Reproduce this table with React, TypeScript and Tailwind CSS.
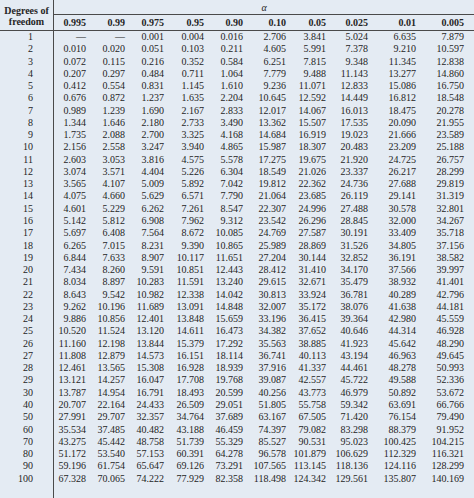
import React from "react";

const rows: [string, string[]][] = [
  ["1", ["—", "—", "0.001", "0.004", "0.016", "2.706", "3.841", "5.024", "6.635", "7.879"]],
  ["2", ["0.010", "0.020", "0.051", "0.103", "0.211", "4.605", "5.991", "7.378", "9.210", "10.597"]],
  ["3", ["0.072", "0.115", "0.216", "0.352", "0.584", "6.251", "7.815", "9.348", "11.345", "12.838"]],
  ["4", ["0.207", "0.297", "0.484", "0.711", "1.064", "7.779", "9.488", "11.143", "13.277", "14.860"]],
  ["5", ["0.412", "0.554", "0.831", "1.145", "1.610", "9.236", "11.071", "12.833", "15.086", "16.750"]],
  ["6", ["0.676", "0.872", "1.237", "1.635", "2.204", "10.645", "12.592", "14.449", "16.812", "18.548"]],
  ["7", ["0.989", "1.239", "1.690", "2.167", "2.833", "12.017", "14.067", "16.013", "18.475", "20.278"]],
  ["8", ["1.344", "1.646", "2.180", "2.733", "3.490", "13.362", "15.507", "17.535", "20.090", "21.955"]],
  ["9", ["1.735", "2.088", "2.700", "3.325", "4.168", "14.684", "16.919", "19.023", "21.666", "23.589"]],
  ["10", ["2.156", "2.558", "3.247", "3.940", "4.865", "15.987", "18.307", "20.483", "23.209", "25.188"]],
  ["11", ["2.603", "3.053", "3.816", "4.575", "5.578", "17.275", "19.675", "21.920", "24.725", "26.757"]],
  ["12", ["3.074", "3.571", "4.404", "5.226", "6.304", "18.549", "21.026", "23.337", "26.217", "28.299"]],
  ["13", ["3.565", "4.107", "5.009", "5.892", "7.042", "19.812", "22.362", "24.736", "27.688", "29.819"]],
  ["14", ["4.075", "4.660", "5.629", "6.571", "7.790", "21.064", "23.685", "26.119", "29.141", "31.319"]],
  ["15", ["4.601", "5.229", "6.262", "7.261", "8.547", "22.307", "24.996", "27.488", "30.578", "32.801"]],
  ["16", ["5.142", "5.812", "6.908", "7.962", "9.312", "23.542", "26.296", "28.845", "32.000", "34.267"]],
  ["17", ["5.697", "6.408", "7.564", "8.672", "10.085", "24.769", "27.587", "30.191", "33.409", "35.718"]],
  ["18", ["6.265", "7.015", "8.231", "9.390", "10.865", "25.989", "28.869", "31.526", "34.805", "37.156"]],
  ["19", ["6.844", "7.633", "8.907", "10.117", "11.651", "27.204", "30.144", "32.852", "36.191", "38.582"]],
  ["20", ["7.434", "8.260", "9.591", "10.851", "12.443", "28.412", "31.410", "34.170", "37.566", "39.997"]],
  ["21", ["8.034", "8.897", "10.283", "11.591", "13.240", "29.615", "32.671", "35.479", "38.932", "41.401"]],
  ["22", ["8.643", "9.542", "10.982", "12.338", "14.042", "30.813", "33.924", "36.781", "40.289", "42.796"]],
  ["23", ["9.262", "10.196", "11.689", "13.091", "14.848", "32.007", "35.172", "38.076", "41.638", "44.181"]],
  ["24", ["9.886", "10.856", "12.401", "13.848", "15.659", "33.196", "36.415", "39.364", "42.980", "45.559"]],
  ["25", ["10.520", "11.524", "13.120", "14.611", "16.473", "34.382", "37.652", "40.646", "44.314", "46.928"]],
  ["26", ["11.160", "12.198", "13.844", "15.379", "17.292", "35.563", "38.885", "41.923", "45.642", "48.290"]],
  ["27", ["11.808", "12.879", "14.573", "16.151", "18.114", "36.741", "40.113", "43.194", "46.963", "49.645"]],
  ["28", ["12.461", "13.565", "15.308", "16.928", "18.939", "37.916", "41.337", "44.461", "48.278", "50.993"]],
  ["29", ["13.121", "14.257", "16.047", "17.708", "19.768", "39.087", "42.557", "45.722", "49.588", "52.336"]],
  ["30", ["13.787", "14.954", "16.791", "18.493", "20.599", "40.256", "43.773", "46.979", "50.892", "53.672"]],
  ["40", ["20.707", "22.164", "24.433", "26.509", "29.051", "51.805", "55.758", "59.342", "63.691", "66.766"]],
  ["50", ["27.991", "29.707", "32.357", "34.764", "37.689", "63.167", "67.505", "71.420", "76.154", "79.490"]],
  ["60", ["35.534", "37.485", "40.482", "43.188", "46.459", "74.397", "79.082", "83.298", "88.379", "91.952"]],
  ["70", ["43.275", "45.442", "48.758", "51.739", "55.329", "85.527", "90.531", "95.023", "100.425", "104.215"]],
  ["80", ["51.172", "53.540", "57.153", "60.391", "64.278", "96.578", "101.879", "106.629", "112.329", "116.321"]],
  ["90", ["59.196", "61.754", "65.647", "69.126", "73.291", "107.565", "113.145", "118.136", "124.116", "128.299"]],
  ["100", ["67.328", "70.065", "74.222", "77.929", "82.358", "118.498", "124.342", "129.561", "135.807", "140.169"]],
];

const heads = ["0.995", "0.99", "0.975", "0.95", "0.90", "0.10", "0.05", "0.025", "0.01", "0.005"];

const GRID = "grid grid-cols-[32px_39px_39px_40px_39px_43px_40px_42px_48px_48px]";

export default function App() {
  return (
    <div
      className="w-[474px] h-[498px] bg-[#e4ebf3] text-[#252525] flex flex-col overflow-hidden"
      style={{ fontFamily: '"Liberation Serif", "Times New Roman", serif' }}
    >
      {/* Header */}
      <div className="flex h-[31px] border-b border-[#4a4a4a] shrink-0">
        <div className="w-[54px] shrink-0 border-r border-[#4a4a4a] flex flex-col items-center justify-center font-bold text-[10px] leading-[11px] pt-[1px]">
          <span>Degrees of</span>
          <span>freedom</span>
        </div>
        <div className="flex-1 flex flex-col">
          <div className="h-[15px] border-b border-[#4a4a4a] flex items-center justify-center italic text-[10px]">
            α
          </div>
          <div className={`${GRID} flex-1 items-center font-bold text-[10px]`}>
            {heads.map((h) => (
              <div key={h} className="text-right pr-[0px]">
                {h}
              </div>
            ))}
          </div>
        </div>
      </div>

      {/* Body */}
      <div className="flex flex-1 pt-[0px]">
        <div className="w-[54px] shrink-0 border-r border-[#4a4a4a] flex flex-col">
          {rows.map(([df]) => (
            <div key={df} className="h-[12.28px] text-[10px] leading-[12.28px] text-right pr-[20px]">
              {df}
            </div>
          ))}
        </div>
        <div className="flex-1 flex flex-col">
          {rows.map(([df, vals]) => (
            <div key={df} className={`${GRID} h-[12.28px] text-[10px] leading-[12.28px]`}>
              {vals.map((v, i) => (
                <div key={i} className="text-right">
                  {v}
                </div>
              ))}
            </div>
          ))}
        </div>
      </div>
    </div>
  );
}
